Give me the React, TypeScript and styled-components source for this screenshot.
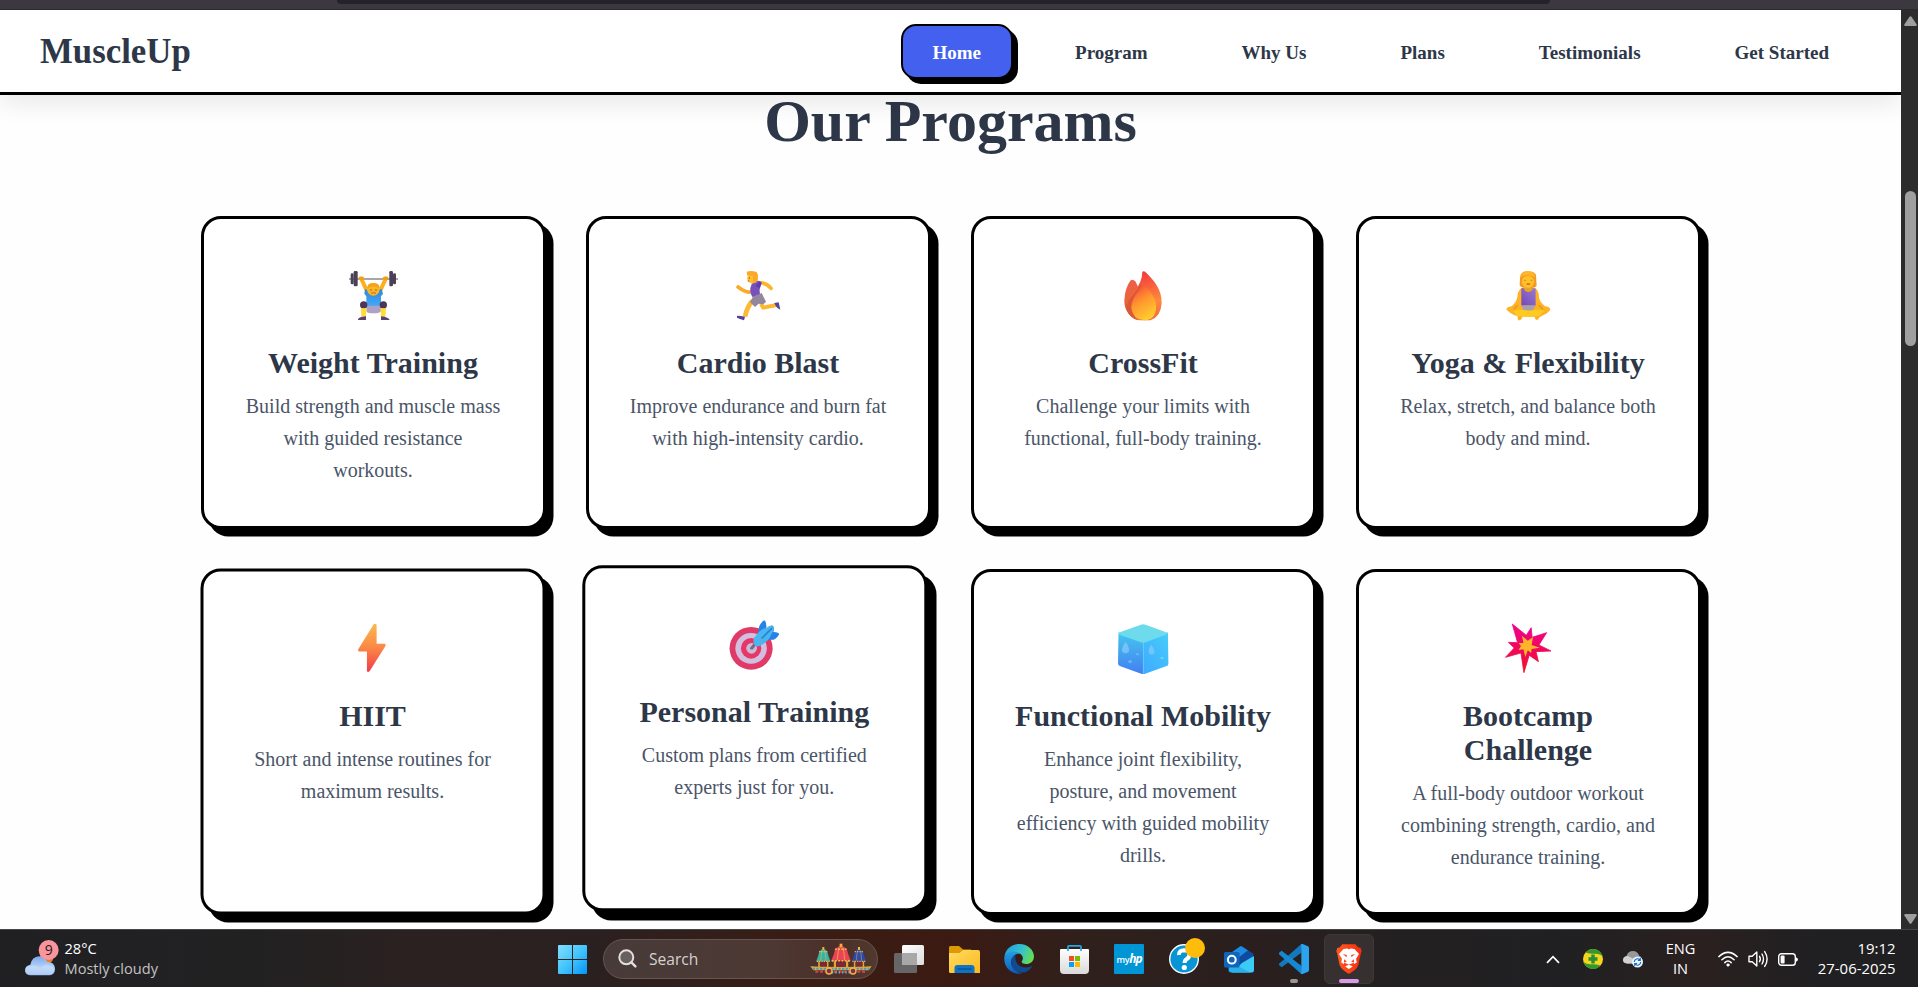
import React from "react";
import styled, { createGlobalStyle, css } from "styled-components";

const GlobalStyle = createGlobalStyle`
  * { box-sizing: border-box; }
  body { margin: 0; background: #fff; font-family: "Liberation Serif", "Times New Roman", serif; }
  svg { display: block; flex: none; overflow: visible; }
`;

const Screen = styled.div`
  width: 1918px;
  height: 987px;
  display: flex;
  flex-direction: column;
  overflow: hidden;
`;

/* ---------- browser window ---------- */

const BrowserEdge = styled.div`
  height: 10px;
  flex: none;
  background: #3b393f;
  border-bottom: 1px solid #2c2a30;
  padding-left: 337px;
`;

const AddressBar = styled.div`
  width: 1213px;
  height: 4px;
  background: #242329;
  border-radius: 0 0 6px 6px;
`;

const Viewport = styled.div`
  height: 919px;
  flex: none;
  display: flex;
`;

const Page = styled.div`
  flex: 1;
  overflow: hidden;
  background: #fefefe;
`;

const Scrollbar = styled.div`
  width: 17px;
  background: #2c2c2c;
  display: flex;
  flex-direction: column;
  align-items: center;
  padding: 6px 0 5px 1px;
`;

const Thumb = styled.div`
  width: 11px;
  height: 155px;
  margin: 165px 0 auto;
  border-radius: 6px;
  background: #9f9f9f;
`;

/* ---------- site header ---------- */

const Header = styled.header`
  position: relative;
  z-index: 1;
  height: 85px;
  display: flex;
  align-items: center;
  justify-content: space-between;
  padding: 0 40px;
  background: #fff;
  border-bottom: 3px solid #000;
  box-shadow: 0 8px 24px rgba(0, 0, 0, 0.09);
`;

const Logo = styled.div`
  padding-top: 2px;
  font-size: 34.8px;
  font-weight: 700;
  color: #2d3748;
`;

const Nav = styled.nav`
  display: flex;
  gap: 30px;
`;

const NavLink = styled.a<{ $active?: boolean }>`
  padding: 16px 30px 14px;
  border: 2px solid transparent;
  border-radius: 15px;
  font-size: 19px;
  line-height: 21px;
  font-weight: 700;
  color: #2d3748;
  ${(p) =>
    p.$active &&
    css`
      color: #fff;
      background: #4361ee;
      border-color: #000;
      box-shadow: 5px 5px 0 #000;
    `}
`;

/* ---------- programs ---------- */

const Programs = styled.main`
  padding-top: 2px;
`;

const SectionTitle = styled.h2`
  margin: 0 0 71px;
  text-align: center;
  font-size: 60px;
  line-height: 48px;
  color: #2d3748;
`;

const Grid = styled.div`
  width: 1500px;
  margin: 0 auto;
  display: grid;
  grid-template-columns: repeat(4, 1fr);
  gap: 40px;
`;

const Card = styled.article<{ $lift?: number; $depth?: number }>`
  padding: 40px 40px 39.2px;
  border: 3px solid #000;
  border-radius: 20px;
  background: #fff;
  text-align: center;
  box-shadow: ${(p) => `${p.$depth ?? 7.5}px ${p.$depth ?? 7.5}px 0 #000`};
  ${(p) => p.$lift && css`transform: translate(-${p.$lift}px, -${p.$lift}px);`}
`;

const CardIcon = styled.div`
  height: 67.2px;
  margin-bottom: 20px;
  padding-top: 12px;
  display: flex;
  justify-content: center;
`;

const CardTitle = styled.h3`
  margin: 0 0 10.3px;
  font-size: 30px;
  line-height: 34px;
  color: #2d3748;
`;

const CardText = styled.p`
  margin: 0;
  font-size: 20px;
  line-height: 32px;
  color: #4a5568;
`;

const Lifter = () => (
  <svg width="49" height="49.3" viewBox="477 212 147 148">
    <defs>
      <linearGradient id="shirt" x1="0" y1="0" x2="0" y2="1">
        <stop offset="0" stopColor="#2f86e0" />
        <stop offset="1" stopColor="#45aaf8" />
      </linearGradient>
    </defs>
    <path d="M477 236H624" stroke="#8c8792" strokeWidth="5" />
    <g fill="#4b3f58">
      <rect x="482" y="219" width="9" height="33" rx="4" />
      <rect x="491" y="212" width="12" height="46" rx="4" />
      <rect x="598" y="212" width="11" height="46" rx="4" />
      <rect x="609" y="219" width="9" height="33" rx="4" />
    </g>
    <path d="M515 238L530 270M586 238L571 270" stroke="#fbb01e" strokeWidth="12" strokeLinecap="round" />
    <path d="M511 234h6M584 234h6" stroke="#f0a016" strokeWidth="11" strokeLinecap="round" />
    <path d="M525 267Q550 276 575 266L579 281L573 288V320H529V288L523 280Z" fill="url(#shirt)" />
    <circle cx="550" cy="267" r="19" fill="#fbb723" />
    <path d="M532 264Q531 248 550 248Q569 248 569 264Q551 253 532 264Z" fill="#f4a31b" />
    <circle cx="543" cy="269" r="2.2" fill="#935421" />
    <circle cx="558" cy="269" r="2.2" fill="#935421" />
    <path d="M544 279Q551 275 558 279" stroke="#c85c25" strokeWidth="3" fill="none" />
    <path d="M529 316H573V331Q571 339 550 339Q529 339 529 331Z" fill="#ada1c6" />
    <circle cx="521" cy="314" r="11" fill="#4c3658" />
    <circle cx="580" cy="314" r="11" fill="#4c3658" />
    <path d="M513 324h17l-3 26h-13zM571 324h17l-2 26h-12z" fill="#ffdc38" />
    <path d="M504 357Q506 350 528 348V359H504ZM573 348Q597 351 599 359H573Z" fill="#594275" />
  </svg>
);

const Runner = () => (
  <svg width="44" height="49.3" viewBox="498 212 132 148">
    <path d="M540 275Q527 277 504 260" stroke="#f9ab25" strokeWidth="11" strokeLinecap="round" fill="none" />
    <path d="M568 247Q590 248 603 264" stroke="#fdb52c" strokeWidth="11" strokeLinecap="round" fill="none" />
    <path d="M573 310L580 322L619 314" stroke="#fdb72f" strokeWidth="12" strokeLinejoin="round" fill="none" />
    <path d="M547 302Q532 317 525 349" stroke="#fdb932" strokeWidth="14" fill="none" />
    <path d="M613 308L626 306L631 328Q620 325 613 308Z" fill="#55429b" />
    <path d="M501 346Q512 346 525 349L522 360Q508 356 501 352Z" fill="#55429b" />
    <path d="M548 243Q563 237 575 247L571 260Q566 270 570 282L548 291Q539 278 541 263Z" fill="#7750bb" />
    <path d="M569 243L575 247L569 263L557 257Z" fill="#5f3bad" />
    <path d="M549 289L575 278L588 304L580 312L566 310L555 320L540 305Z" fill="#92879c" />
    <path d="M532 229V240Q536 249 549 250L564 238V220L545 218Z" fill="#ffc02f" />
    <path d="M530 214Q543 209 560 215Q567 235 558 248L549 247V226H532Z" fill="#fca92b" />
    <circle cx="538" cy="233" r="2" fill="#935421" />
    <circle cx="536" cy="242" r="2" fill="#db4238" />
  </svg>
);

const Flame = () => (
  <svg width="38" height="49.3" viewBox="72 62 114 148">
    <defs>
      <linearGradient id="flameOut" x1=".5" y1="0" x2=".7" y2="1">
        <stop offset="0" stopColor="#f4383e" />
        <stop offset=".65" stopColor="#ff8a3c" />
        <stop offset="1" stopColor="#f26a3a" />
      </linearGradient>
      <linearGradient id="flameBack" x1=".4" y1="0" x2=".2" y2="1">
        <stop offset="0" stopColor="#f05e49" />
        <stop offset=".6" stopColor="#e8663a" />
        <stop offset="1" stopColor="#d4512f" />
      </linearGradient>
      <linearGradient id="flameIn" x1=".3" y1="0" x2=".75" y2="1">
        <stop offset="0" stopColor="#fb5534" />
        <stop offset=".4" stopColor="#ff962f" />
        <stop offset="1" stopColor="#ffd42f" />
      </linearGradient>
    </defs>
    <path d="M92 90Q98 85 106 93L112 105L140 180L112 208Q72 191 73 150Q75 112 92 90Z" fill="url(#flameBack)" />
    <path d="M127 64Q132 60 137 66C161 89 186 118 185 158Q183 199 151 210H118Q88 205 80 176Q82 149 103 123Q127 94 127 64Z" fill="url(#flameOut)" />
    <path d="M79 178Q79 153 101 130Q114 117 123 98Q127 104 118 119Q93 148 94 171Q96 193 113 209Q89 202 79 178Z" fill="#d85934" />
    <path d="M131 110Q134 107 138 111C157 128 171 151 168 176Q164 210 133 210Q99 207 95 175Q93 157 111 136Q125 121 131 110Z" fill="url(#flameIn)" />
  </svg>
);

const Yoga = () => (
  <svg width="44.3" height="49.3" viewBox="1217 62 133 148">
    <defs>
      <linearGradient id="yogaTop" x1="0" y1="1" x2="1" y2="0">
        <stop offset="0" stopColor="#7049b7" />
        <stop offset="1" stopColor="#9b79d5" />
      </linearGradient>
    </defs>
    <path d="M1259 83Q1260 63 1280 63Q1300 62 1307 73L1309 106Q1305 114 1285 113Q1263 115 1258 105Z" fill="#f29a25" />
    <path d="M1264 113Q1283 106 1304 113Q1316 120 1316 141Q1318 155 1334 168Q1349 169 1350 178Q1342 190 1325 196Q1314 201 1314 208Q1305 211 1303 199H1266Q1264 210 1254 210Q1251 204 1252 198Q1228 191 1218 177Q1219 170 1234 168Q1249 155 1251 140Q1252 120 1264 113Z" fill="#fdb324" />
    <path d="M1263 114H1272Q1284 133 1297 114H1306V166H1263Z" fill="url(#yogaTop)" />
    <path d="M1262 165H1306L1297 181H1271Z" fill="#a9a0a8" />
    <path d="M1238 181Q1260 177 1284 181Q1310 177 1332 181L1318 196Q1284 203 1250 196Z" fill="#ffcb22" />
    <path d="M1252 165L1240 177M1316 165L1328 177" stroke="#ed9820" strokeWidth="5" />
    <path d="M1272 106h24v14q-12 10-24 0z" fill="#eaa51f" />
    <rect x="1265" y="77" width="36" height="35" rx="16" fill="#ffc12a" />
    <path d="M1260 83Q1271 68 1305 80Q1302 62 1280 63Q1264 64 1260 83Z" fill="#ffb629" />
    <path d="M1272 90h5M1291 90h5" stroke="#c07a22" strokeWidth="2.5" />
    <path d="M1279 100q5 3 10 0" stroke="#d9453f" strokeWidth="3.5" fill="none" />
  </svg>
);

const Bolt = () => (
  <svg width="28" height="48.7" viewBox="346.5 221 58 146" preserveAspectRatio="none">
    <defs>
      <linearGradient id="bolt" x1="0" y1="0" x2="0" y2="1">
        <stop offset="0" stopColor="#fdb84f" />
        <stop offset=".5" stopColor="#fb8745" />
        <stop offset="1" stopColor="#f4394b" />
      </linearGradient>
    </defs>
    <path d="M378 223Q382 220 384 225V282H401Q404 284 402 289L370 363Q367 369 364 364V305H348Q344 303 346 298Z" fill="url(#bolt)" />
  </svg>
);

const Target = () => (
  <svg width="50.4" height="49.7" viewBox="1112 209 104 149" preserveAspectRatio="none">
    <ellipse cx="1157" cy="293" rx="44.5" ry="64" fill="#e03a68" />
    <ellipse cx="1157" cy="293" rx="32.5" ry="46" fill="#d2bfdf" />
    <ellipse cx="1157" cy="293" rx="21" ry="31" fill="#e63766" />
    <ellipse cx="1158" cy="293" rx="11" ry="16" fill="#cabbd8" />
    <path d="M1158 293L1168 275" stroke="#766b83" strokeWidth="7" strokeLinecap="round" />
    <path d="M1170 252L1174 226Q1180 209 1186 210Q1190 222 1188 236Q1190 230 1200 224Q1206 228 1203 244Q1215 245 1215 251Q1210 264 1203 267L1185 268Z" fill="#2584e8" />
    <path d="M1163 262Q1178 232 1188 233Q1196 222 1203 228Q1206 236 1199 250Q1194 270 1181 281Q1171 292 1164 284Q1160 274 1163 262Z" fill="#4bb6ee" />
    <path d="M1180 262L1199 234" stroke="#2382d9" strokeWidth="4" strokeLinecap="round" />
  </svg>
);

const Ice = () => (
  <svg width="50.4" height="50.3" viewBox="326 219 104 151" preserveAspectRatio="none">
    <defs>
      <linearGradient id="iceL" x1=".5" y1="0" x2=".5" y2="1">
        <stop offset="0" stopColor="#45c6ee" />
        <stop offset="1" stopColor="#437ff1" />
      </linearGradient>
      <linearGradient id="iceR" x1="0" y1="1" x2=".8" y2="0">
        <stop offset="0" stopColor="#3daaff" />
        <stop offset="1" stopColor="#46cafa" />
      </linearGradient>
    </defs>
    <path d="M327 244L378 270V369Q376 370 371 367L331 346Q326 343 326 338Z" fill="url(#iceL)" />
    <path d="M378 270L429 244L430 338Q430 344 425 346L382 368Q379 370 378 369Z" fill="url(#iceR)" />
    <path d="M373 221Q378 218 383 221L424 243Q431 247 424 251L383 273Q378 276 373 273L331 252Q324 248 331 243Z" fill="#6edbed" />
    <path d="M329 249L378 276L427 249M378 276V366" stroke="#61ddf7" strokeWidth="1.5" fill="none" opacity=".6" />
    <path d="M342 272Q352 294 348 303Q342 310 335 303Q332 290 342 272ZM395 281Q403 299 401 307Q395 315 390 307Q387 295 395 281Z" fill="#86c8fb" opacity=".75" />
    <circle cx="351" cy="332" r="4" fill="#6db4fa" />
    <circle cx="366" cy="310" r="3" fill="#6abffa" />
    <circle cx="417" cy="321" r="3.5" fill="#6bcffd" />
  </svg>
);

const Burst = () => (
  <svg width="46.5" height="49.3" viewBox="1124 220 96 148" preserveAspectRatio="none">
    <defs>
      <linearGradient id="burst" x1="0" y1="0" x2="0" y2="1">
        <stop offset="0" stopColor="#ef0091" />
        <stop offset="1" stopColor="#f01029" />
      </linearGradient>
    </defs>
    <path d="M1139 220L1168 254L1178 231L1180 260L1210 246L1194 283L1219 301L1188 303L1193 333L1174 314L1163 366L1157 307L1125 320L1143 292L1131 275L1150 276Z" fill="url(#burst)" stroke="url(#burst)" strokeWidth="2" strokeLinejoin="round" />
    <path d="M1159 255L1171 270L1182 259L1179 283L1196 291L1179 295L1178 307L1171 299L1166 319L1162 296L1152 298L1157 286L1152 277L1162 277Z" fill="#ffb529" />
  </svg>
);

interface Program {
  icon: React.ReactNode;
  title: string;
  text: string;
  lift?: number;
  depth?: number;
}

const programs: Program[] = [
  { icon: <Lifter />, title: "Weight Training", text: "Build strength and muscle mass with guided resistance workouts." },
  { icon: <Runner />, title: "Cardio Blast", text: "Improve endurance and burn fat with high-intensity cardio." },
  { icon: <Flame />, title: "CrossFit", text: "Challenge your limits with functional, full-body training." },
  { icon: <Yoga />, title: "Yoga & Flexibility", text: "Relax, stretch, and balance both body and mind." },
  { icon: <Bolt />, title: "HIIT", text: "Short and intense routines for maximum results.", lift: 0.5, depth: 8 },
  { icon: <Target />, title: "Personal Training", text: "Custom plans from certified experts just for you.", lift: 3.7, depth: 9.2 },
  { icon: <Ice />, title: "Functional Mobility", text: "Enhance joint flexibility, posture, and movement efficiency with guided mobility drills." },
  { icon: <Burst />, title: "Bootcamp Challenge", text: "A full-body outdoor workout combining strength, cardio, and endurance training." },
];

const navItems = ["Home", "Program", "Why Us", "Plans", "Testimonials", "Get Started"];

/* ---------- taskbar ---------- */

const Taskbar = styled.footer`
  height: 58px;
  flex: none;
  display: grid;
  grid-template-columns: 558px 1fr auto;
  align-items: center;
  padding-top: 1px;
  border-top: 1px solid #454446;
  background: linear-gradient(90deg, #202023 0, #222122 260px, #2b2120 420px, #2b2020 600px, #3a1d14 810px, #3b1a12 950px, #30201c 1080px, #2a1f1e 1250px, #232021 1400px, #202022 1560px, #2a201f 1700px, #202022 1820px);
  color: #fff;
  font-family: "Open Sans", "Noto Sans", sans-serif;
  font-size: 15px;
  line-height: 20px;
`;

const Weather = styled.div`
  display: flex;
  align-items: center;
  gap: 4.5px;
  padding-left: 24px;
`;

const WeatherText = styled.div`
  margin-top: -2px;
  font-size: 14.6px;
`;

const Muted = styled.div`
  color: #c3c3c4;
`;

const Apps = styled.div`
  display: flex;
  align-items: center;
`;

const SearchBox = styled.div`
  width: 275px;
  height: 40px;
  margin: 0 3.5px 0 16px;
  padding: 0 5px 1px 14px;
  display: flex;
  align-items: center;
  gap: 12px;
  border: 1px solid #685450;
  border-radius: 20px;
  background: linear-gradient(90deg, #473b39, #4d3934 60%, #4b2f28 85%, #51392f);
  color: #d6d0cf;
  font-size: 15.6px;

  svg:last-child { margin-left: auto; }
`;

const AppSlot = styled.div<{ $active?: boolean }>`
  width: 55px;
  height: 50px;
  display: flex;
  justify-content: center;
  align-items: center;
  ${(p) =>
    p.$active &&
    css`
      width: 50px;
      margin-left: 2.5px;
      border: 1px solid #3e3938;
      border-radius: 6px;
      background: #363130;
    `}
`;

const IconStack = styled.div`
  position: relative;
`;

const RunningMark = styled.span<{ $w: number; $color: string }>`
  position: absolute;
  bottom: -9px;
  left: calc(50% - ${(p) => p.$w / 2}px);
  width: ${(p) => p.$w}px;
  height: 4px;
  border-radius: 2px;
  background: ${(p) => p.$color};
`;

const HpTile = styled.div`
  width: 30px;
  height: 30px;
  border-radius: 1px;
  background: #0096d6;
  font-size: 9px;
  font-weight: 600;
  line-height: 29px;
  text-align: center;
  letter-spacing: -0.3px;
  white-space: nowrap;

  i {
    font-size: 12px;
    font-weight: 700;
    letter-spacing: -1px;
  }
`;

const Tray = styled.div`
  display: flex;
  align-items: center;
  padding-right: 22.5px;
`;

const TrayIcons = styled.div`
  display: flex;
  align-items: center;
  gap: 20px;

  svg:first-child { margin-right: 3px; }
`;

const Language = styled.div`
  width: 30px;
  margin: -2px 22px 0 23px;
  text-align: center;
  font-size: 14.6px;
`;

const Status = styled.div`
  display: flex;
  align-items: center;
  gap: 10px;
  width: 80px;
`;

const Clock = styled.div`
  width: 98px;
  margin-top: -2px;
  text-align: right;
  font-size: 14.9px;
`;

const WeatherIcon = () => (
  <svg width="36" height="40" viewBox="72 107 108 120">
    <defs>
      <linearGradient id="cloud" x1="0" y1="0" x2="0" y2="1">
        <stop offset="0" stopColor="#7da7ec" />
        <stop offset=".6" stopColor="#b9d4fa" />
        <stop offset="1" stopColor="#8eb2ee" />
      </linearGradient>
    </defs>
    <circle cx="140" cy="162" r="20" fill="#f07b1d" />
    <path d="M90 216Q75 214 75 200Q76 187 91 184Q96 160 117 159Q134 160 142 176Q164 175 165 197Q164 215 149 216Z" fill="url(#cloud)" />
    <path d="M76 203Q79 188 93 188Q108 181 123 197Q130 181 145 184Q160 187 163 200Q160 213 148 214H91Q78 213 76 203Z" fill="#c9defb" opacity=".55" />
    <circle cx="146" cy="140" r="30" fill="#fb959d" />
    <text x="146" y="154" textAnchor="middle" fontSize="42" fill="#211b20" fontFamily="Open Sans">9</text>
  </svg>
);

const WindowsLogo = () => (
  <svg width="29" height="29" viewBox="0 0 29 29">
    <defs>
      <linearGradient id="win" x1="0" y1="0" x2="1" y2="1">
        <stop offset="0" stopColor="#83deff" />
        <stop offset=".5" stopColor="#43c5fb" />
        <stop offset="1" stopColor="#0494fa" />
      </linearGradient>
    </defs>
    <path d="M1 0h13v14H0V1q0-1 1-1zM15 0h13q1 0 1 1v13H15zM0 15h14v14H1q-1 0-1-1zM15 15h14v13q0 1-1 1H15z" fill="url(#win)" />
  </svg>
);

const SearchIcon = () => (
  <svg width="19" height="19" viewBox="0 0 19 19" fill="none" stroke="#e3dfde" strokeLinecap="round">
    <circle cx="8.3" cy="8.3" r="7" strokeWidth="2" fill="#67605f" />
    <path d="M13.4 13.4L17.4 17.4" strokeWidth="2.4" />
  </svg>
);

/* One domed canopy; (x, y) is the tip of the dome. */
const Canopy = ({ x, y, roof, trim }: { x: number; y: number; roof: string; trim: string }) => (
  <g transform={`translate(${x} ${y})`}>
    <path d="M0 0Q13 3 15 20L21 38H-21L-15 20Q-13 3 0 0Z" fill={roof} />
    <path d="M-13 9H13M-20 38H20" stroke={trim} strokeWidth="4" strokeDasharray="4 3" />
    <path d="M-5 6L-8 36M5 6L8 36" stroke={trim} strokeWidth="1.5" />
    <path d="M-13 38V57M13 38V57" stroke="#e0a33c" strokeWidth="5" />
    <path d="M-10 40h20v17h-20z" fill="#7e2636" />
    <path d="M0 -5V4" stroke="#f0b13e" strokeWidth="6" />
  </g>
);

const FestivalArt = () => (
  <svg width="62" height="32" viewBox="810 86 186 96">
    <Canopy x={850} y={103} roof="#3db1a0" trim="#e8c463" />
    <Canopy x={957} y={103} roof="#2d4aa8" trim="#e0ac50" />
    <g transform="translate(903 94) scale(1.4 1.2)">
      <Canopy x={0} y={0} roof="#ea4552" trim="#f5bc54" />
    </g>
    <path d="M811 156Q834 158 903 158Q972 158 995 156L986 168H820Z" fill="#e1ae3b" />
    <path d="M818 163H988" stroke="#3f9fbd" strokeWidth="6" strokeDasharray="7 4" />
    <path d="M826 172H980" stroke="#d93f50" strokeWidth="7" strokeDasharray="9 5" />
    <path d="M876 174H930" stroke="#58bad5" strokeWidth="7" strokeDasharray="4 6" />
    <circle cx="867" cy="170" r="9" fill="#7d3150" stroke="#efb545" strokeWidth="4" />
    <circle cx="939" cy="170" r="9" fill="#7d3150" stroke="#efb545" strokeWidth="4" />
  </svg>
);

const TaskView = () => (
  <svg width="30" height="28" viewBox="0 0 30 28">
    <defs>
      <linearGradient id="tv" x1="0" y1="0" x2="1" y2="1">
        <stop offset="0" stopColor="#fff" />
        <stop offset="1" stopColor="#dcdcdc" />
      </linearGradient>
    </defs>
    <rect x="0" y="8" width="23" height="20" rx="1.5" fill="#666" />
    <rect x="8" y="0" width="22" height="20" rx="1.5" fill="url(#tv)" />
    <path d="M8 8h15v12H9q-1 0-1-1z" fill="#a9a8a8" />
  </svg>
);

const Folder = () => (
  <svg width="31" height="27" viewBox="0 0 31 27">
    <defs>
      <linearGradient id="folder" x1="0" y1="0" x2="1" y2="1">
        <stop offset="0" stopColor="#ffdb62" />
        <stop offset="1" stopColor="#fbb91c" />
      </linearGradient>
    </defs>
    <path d="M1.5 0H10l4 3.5h8V10H0V1.5Q0 0 1.5 0Z" fill="#dd9a05" />
    <path d="M0 7h10.5L14 4h15q2 0 2 2v21H1.5Q0 27 0 25.5Z" fill="url(#folder)" />
    <path d="M5.5 27v-5q0-3 3-3h14q3 0 3 3v5z" fill="#0f73c4" />
    <path d="M9 23h13" stroke="#07559c" strokeWidth="1.6" strokeLinecap="round" />
  </svg>
);

const Edge = () => (
  <svg width="30" height="30" viewBox="161 87 91 91">
    <defs>
      <linearGradient id="edgeTop" x1="0" y1=".3" x2="1" y2=".6">
        <stop offset="0" stopColor="#229fe0" />
        <stop offset=".55" stopColor="#35c3cc" />
        <stop offset="1" stopColor="#67e04c" />
      </linearGradient>
      <linearGradient id="edgeLow" x1="0" y1="0" x2="0" y2="1">
        <stop offset="0" stopColor="#239de5" />
        <stop offset="1" stopColor="#0b5db8" />
      </linearGradient>
    </defs>
    <path d="M162 127C165 103 183 87 207 87C234 87 252 106 252 125C251 144 235 150 223 147Q212 145 216 138Q222 128 213 119C198 106 168 113 162 127Z" fill="url(#edgeTop)" />
    <path d="M162 127C169 108 196 105 210 118Q201 113 191 123Q176 139 187 157Q196 174 216 176C188 182 159 161 162 127Z" fill="url(#edgeLow)" />
    <path d="M197 119Q179 130 184 150Q193 180 225 173Q239 168 247 154C230 162 209 158 201 147Q192 132 197 119Z" fill="#114a93" />
  </svg>
);

const Store = () => (
  <svg width="29" height="29" viewBox="0 0 29 29">
    <defs>
      <linearGradient id="store" x1="0" y1="0" x2="0" y2="1">
        <stop offset="0" stopColor="#fff" />
        <stop offset="1" stopColor="#d9d9d9" />
      </linearGradient>
    </defs>
    <path d="M0 5q0-1 1-1h27q1 0 1 1v20q0 4-4 4H4q-4 0-4-4z" fill="url(#store)" />
    <path d="M8 6V1.8Q8 .8 9 .8h11q1 0 1 1V6" fill="none" stroke="#25a7e2" strokeWidth="1.7" />
    <path d="M9 11h5v5H9z" fill="#f25022" />
    <path d="M15 11h5v5h-5z" fill="#7fba00" />
    <path d="M9 17h5v5H9z" fill="#00a4ef" />
    <path d="M15 17h5v5h-5z" fill="#ffb900" />
  </svg>
);

const Help = () => (
  <svg width="30" height="30" viewBox="0 6 30 30">
    <circle cx="15" cy="21" r="14.3" fill="#0795d5" stroke="#fff" strokeWidth="1.4" />
    <path d="M10 17Q9.7 12.3 15 12.3Q20.6 12.5 20.4 17Q20.2 19.6 17.4 21.3Q15.6 22.3 15.6 25" fill="none" stroke="#fff" strokeWidth="4" />
    <circle cx="15.3" cy="29.5" r="2.6" fill="#fff" />
    <circle cx="26" cy="10" r="10" fill="#ffbc0b" />
  </svg>
);

const Outlook = () => (
  <svg width="30" height="27" viewBox="0 0 30 27">
    <path d="M4 9L16 .5Q17 0 18 .5L29 8v17q0 1.5-1.5 1.5H7Q4 26.5 4 24Z" fill="#0b55a8" />
    <path d="M16 .5Q17 0 18 .5L24 4.5L12 14L4 9Z" fill="#1c8ce0" />
    <path d="M24 4.5L30 8L15 19L10 15Z" fill="#1149a0" />
    <path d="M30 10V24q0 2.5-2.5 2.5H8L18 17Z" fill="#3ccbf4" />
    <path d="M5 21l9-1 12 6.5H8Q5 26.5 5 24Z" fill="#2bb0ea" />
    <rect x="0" y="6" width="15.5" height="15.5" rx="1.5" fill="#0f65bd" />
    <circle cx="7.8" cy="13.7" r="3.9" fill="none" stroke="#fff" strokeWidth="2" />
  </svg>
);

const VsCode = () => (
  <svg width="30" height="30" viewBox="987 87 90 90">
    <path d="M1054 113L995 157L987 150V146L1054 87Z" fill="#1378bd" />
    <path d="M1054 152L995 107L987 113V118L1054 177Z" fill="#1489d2" />
    <path d="M1053 88Q1055 86 1058 87L1074 94Q1077 96 1077 99V165Q1077 168 1074 170L1058 177Q1055 178 1053 176L1054 152V112Z" fill="#2ba3ed" />
  </svg>
);

const Brave = () => (
  <svg width="26" height="30" viewBox="1158 87 77 91">
    <defs>
      <linearGradient id="brave" x1="0" y1="0" x2="1" y2="0">
        <stop offset="0" stopColor="#ff5a1f" />
        <stop offset="1" stopColor="#f92c0f" />
      </linearGradient>
    </defs>
    <path d="M1176 88H1216L1224 97L1232 99L1235 108L1232 117L1225 151Q1222 160 1214 166L1201 175Q1196 179 1191 175L1179 166Q1171 160 1168 151L1161 117L1158 108L1161 99L1169 97Z" fill="url(#brave)" />
    <path d="M1180 102L1192 101L1196 104L1201 101L1213 102L1227 117L1218 132L1220 143L1207 151L1185 151L1173 143L1175 132L1166 117Z" fill="#fff" />
    <path d="M1178 117L1190 120L1189 127ZM1215 117L1203 120L1204 127ZM1182 133L1190 141L1181 143ZM1211 133L1203 141L1212 143Z" fill="#fb4118" />
    <path d="M1182 144L1196 149L1211 144L1213 150L1196 156L1180 150Z" fill="#fb4118" />
    <path d="M1185 155L1196 149L1208 155L1196 163Z" fill="#fff" />
  </svg>
);

const Chevron = () => (
  <svg width="14" height="9" viewBox="0 0 14 9" fill="none" stroke="#fff" strokeWidth="1.7">
    <path d="M1 7.8L7 1.7L13 7.8" />
  </svg>
);

const Shield = () => (
  <svg width="20" height="20" viewBox="0 0 20 20">
    <circle cx="10" cy="10" r="10" fill="#f8d51d" />
    <path d="M2.5 3.5Q6 0 10 0Q17 0 19.5 7Q16 4.5 12 4.7Q7 5 2.5 3.5ZM17.5 16.5Q14.5 20 10 20Q3 20 .5 13Q4 15.5 8 15.3Q13 15 17.5 16.5Z" fill="#35982e" />
    <path d="M8.3 5.5h3.4v2.8h2.8v3.4h-2.8v2.8H8.3v-2.8H5.5V8.3h2.8z" fill="#239138" />
  </svg>
);

const CloudSync = () => (
  <svg width="20" height="18" viewBox="0 0 20 18">
    <path d="M4 13.5Q0 13 0 9.5Q0 6.5 3.5 6Q5 1 10 1Q14.5 1 16 5.5Q19 7 19 10L16 13.5Z" fill="#989898" />
    <path d="M0 10Q1 6 5 6L16 12L14 13.5H4Q0 13 0 10Z" fill="#d2d2d2" />
    <circle cx="14.5" cy="12" r="5.5" fill="#eaf4ff" />
    <path d="M11.3 12A3.2 3.2 0 0 1 17 10M17.7 12A3.2 3.2 0 0 1 12 14M17.3 8v2.4h-2.4M11.7 16v-2.4h2.4" fill="none" stroke="#1769c8" strokeWidth="1.1" />
  </svg>
);

const Wifi = () => (
  <svg width="20" height="16" viewBox="0 0 20 16" fill="none" stroke="#fff" strokeWidth="1.5" strokeLinecap="round">
    <path d="M.9 5.6Q10-2.9 19.1 5.6M3.9 8.7Q10 2.8 16.1 8.7M6.8 11.6Q10 8.4 13.2 11.6" />
    <circle cx="10" cy="14" r="1.2" fill="#fff" strokeWidth=".8" />
  </svg>
);

const Volume = () => (
  <svg width="20" height="18" viewBox="0 0 20 18" fill="none" stroke="#fff" strokeWidth="1.4" strokeLinecap="round" strokeLinejoin="round">
    <path d="M1 6.2H4.2L8.8 2V16L4.2 11.8H1Z" />
    <path d="M11.5 6.3Q13.2 9 11.5 11.7M14 4Q17 9 14 14M16.7 1.6Q21.5 9 16.7 16.4" />
  </svg>
);

const Battery = () => (
  <svg width="20" height="13" viewBox="0 0 20 13">
    <rect x=".7" y=".7" width="16.6" height="11.6" rx="2.8" fill="none" stroke="#fff" strokeWidth="1.4" />
    <rect x="2.6" y="2.6" width="4" height="7.8" rx="1" fill="#fff" />
    <path d="M18 4.2Q20 5 20 6.5Q20 8 18 8.8Z" fill="#fff" />
  </svg>
);

export default function App() {
  return (
    <Screen>
      <GlobalStyle />
      <BrowserEdge>
        <AddressBar />
      </BrowserEdge>
      <Viewport>
        <Page>
          <Header>
            <Logo>MuscleUp</Logo>
            <Nav>
              {navItems.map((item, i) => (
                <NavLink key={item} $active={i === 0}>
                  {item}
                </NavLink>
              ))}
            </Nav>
          </Header>
          <Programs>
            <SectionTitle>Our Programs</SectionTitle>
            <Grid>
              {programs.map((p) => (
                <Card key={p.title} $lift={p.lift} $depth={p.depth}>
                  <CardIcon>{p.icon}</CardIcon>
                  <CardTitle>{p.title}</CardTitle>
                  <CardText>{p.text}</CardText>
                </Card>
              ))}
            </Grid>
          </Programs>
        </Page>
        <Scrollbar>
          <svg width="13" height="10" viewBox="0 0 13 10">
            <path d="M5.5.8Q6.5-.4 7.5.8L12.7 8.5Q13 10 11.7 10H1.3Q0 10 .3 8.5Z" fill="#9f9f9f" />
          </svg>
          <Thumb />
          <svg width="13" height="10" viewBox="0 0 13 10">
            <path d="M5.5 9.2Q6.5 10.4 7.5 9.2L12.7 1.5Q13 0 11.7 0H1.3Q0 0 .3 1.5Z" fill="#9f9f9f" />
          </svg>
        </Scrollbar>
      </Viewport>
      <Taskbar>
        <Weather>
          <WeatherIcon />
          <WeatherText>
            <div>28°C</div>
            <Muted>Mostly cloudy</Muted>
          </WeatherText>
        </Weather>
        <Apps>
          <WindowsLogo />
          <SearchBox>
            <SearchIcon />
            Search
            <FestivalArt />
          </SearchBox>
          <AppSlot><TaskView /></AppSlot>
          <AppSlot><Folder /></AppSlot>
          <AppSlot><Edge /></AppSlot>
          <AppSlot><Store /></AppSlot>
          <AppSlot>
            <HpTile>my<i>hp</i></HpTile>
          </AppSlot>
          <AppSlot><Help /></AppSlot>
          <AppSlot><Outlook /></AppSlot>
          <AppSlot>
            <IconStack>
              <VsCode />
              <RunningMark $w={8} $color="#9a9694" />
            </IconStack>
          </AppSlot>
          <AppSlot $active>
            <IconStack>
              <Brave />
              <RunningMark $w={20} $color="#d99be5" />
            </IconStack>
          </AppSlot>
        </Apps>
        <Tray>
          <TrayIcons>
            <Chevron />
            <Shield />
            <CloudSync />
          </TrayIcons>
          <Language>
            <div>ENG</div>
            <div>IN</div>
          </Language>
          <Status>
            <Wifi />
            <Volume />
            <Battery />
          </Status>
          <Clock>
            <div>19:12</div>
            <div>27-06-2025</div>
          </Clock>
        </Tray>
      </Taskbar>
    </Screen>
  );
}
